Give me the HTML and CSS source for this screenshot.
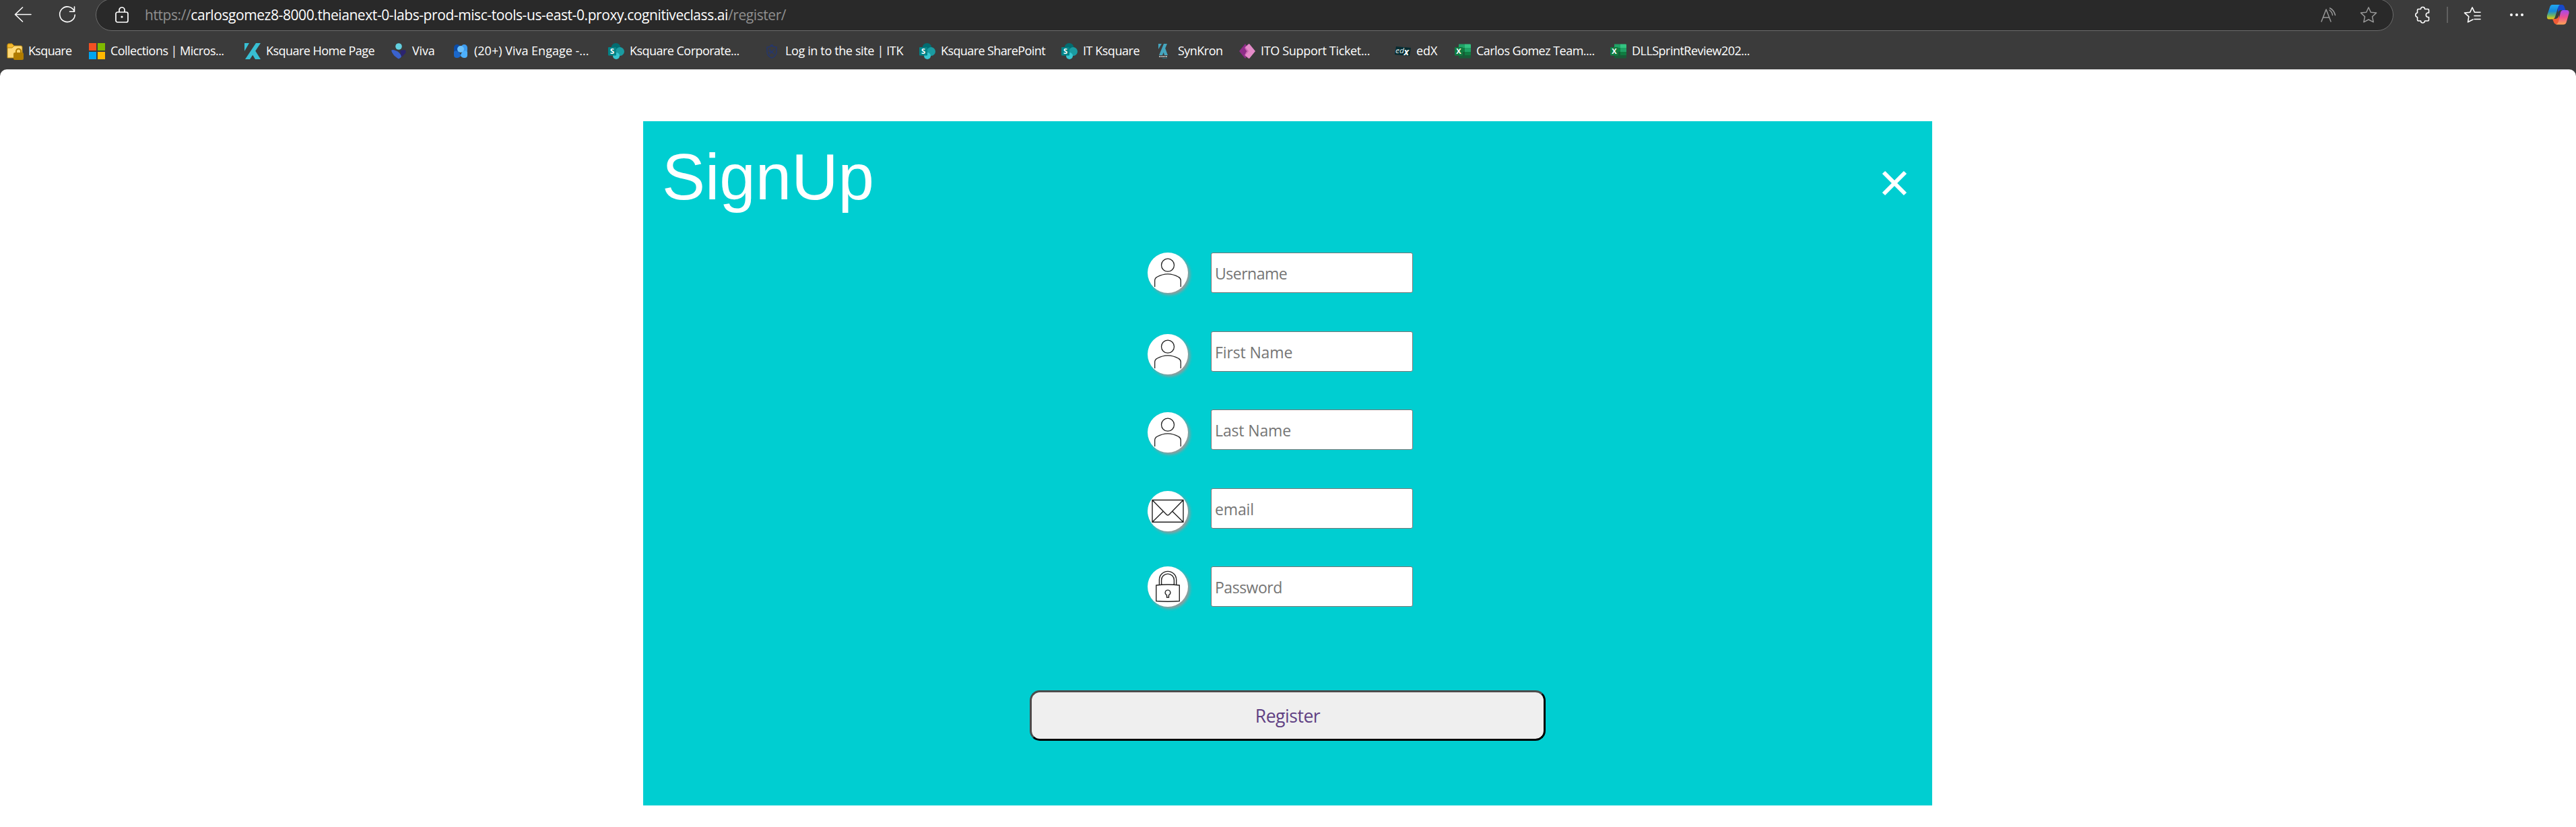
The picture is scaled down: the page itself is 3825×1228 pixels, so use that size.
FILE: index.html
```html
<!DOCTYPE html>
<html lang="en">
<head>
<meta charset="utf-8">
<title>SignUp</title>
<link rel="stylesheet" href="styles.css">
</head>
<body>
<svg class="defs" width="0" height="0" aria-hidden="true">
  <defs>
    <linearGradient id="blue" x1="0" y1="0" x2="1" y2="1"><stop offset="0" stop-color="#0b4fb0"/><stop offset="1" stop-color="#55b9ff"/></linearGradient>
    <linearGradient id="cpA" x1="0" y1="0" x2="0" y2="1"><stop offset="0" stop-color="#22a7f2"/><stop offset=".45" stop-color="#1589d8"/><stop offset=".75" stop-color="#6fb563"/><stop offset="1" stop-color="#f5c80c"/></linearGradient>
    <linearGradient id="cpB" x1="0" y1="0" x2="0" y2="1"><stop offset="0" stop-color="#a348f0"/><stop offset=".5" stop-color="#ee5090"/><stop offset="1" stop-color="#ffa553"/></linearGradient>
  </defs>
  <symbol id="sharepoint" viewBox="0 0 24 24">
    <circle cx="11.500" cy="7" r="7" fill="#036c70"/><circle cx="17.500" cy="12.500" r="6.500" fill="#1a9ba1"/><circle cx="12" cy="19" r="5" fill="#37c6d0"/>
    <rect y="6" width="12" height="12.500" rx="1" fill="#038387"/>
  </symbol>
  <symbol id="excel" viewBox="0 0 24 24">
    <path d="M6 1.500h9v7H6z" fill="#21a366"/><path d="M15 1.500h8a1 1 0 0 1 1 1v4.500h-9z" fill="#33c481"/><path d="M6 7h9v6H6z" fill="#107c41"/><path d="M15 7h9v6h-9z" fill="#21a366"/><path d="M15 13h9v5h-9z" fill="#107c41"/><path d="M6 13h9v5h9v3.500a1 1 0 0 1-1 1H7a1 1 0 0 1-1-1z" fill="#185c37"/>
    <rect y="6" width="12" height="12.500" rx="1" fill="#107c41"/>
  </symbol>
  <symbol id="person" viewBox="0 0 60 60">
    <g fill="none" stroke="#222" stroke-width="1.300"><circle cx="30" cy="18.700" r="9.500"/><path d="M10.700 51V41.500Q10.700 38 14 36.300Q30 27.300 46 36.300Q49.300 38 49.300 41.500V51"/></g>
  </symbol>
</svg>

<header class="browser">
  <div class="toolbar">
    <svg class="nav-icon back" width="26" height="24" viewBox="0 0 26 24"><path d="M12.500 1L1.500 11.500L12.500 22M1.500 11.500H25"/></svg>
    <svg class="nav-icon reload" width="26" height="26" viewBox="0 0 26 26"><path d="M23.500 8A11.300 11.300 0 1 0 24.300 13M23.500 1V8.200H16.500"/></svg>
    <div class="address">
      <svg class="lock" width="20" height="24" viewBox="0 0 20 24"><rect x="1" y="8" width="18" height="15" rx="2.500"/><path d="M6 8V5a4 4 0 0 1 8 0V8"/><circle class="dot" cx="10" cy="15" r="1.600"/></svg>
      <div class="url"><span>https://</span><span class="host">carlosgomez8-8000.theianext-0-labs-prod-misc-tools-us-east-0.proxy.cognitiveclass.ai</span><span>/register/</span></div>
      <svg class="dim read" width="24" height="24" viewBox="0 0 24 24"><path d="M1 22L8 4L15 22M3.500 16H12.500M13 5Q17 8 17.500 12.500M13.500 2Q19.500 5 21.500 12.500"/></svg>
      <svg class="dim fav" width="26" height="26" viewBox="0 0 26 26"><path d="M13 2L16.300 9.200L24.500 10.100L18.500 15.700L20.200 23.800L13 20L5.800 23.800L7.500 15.700L1.500 10.100L9.700 9.200Z"/></svg>
    </div>
    <svg class="nav-icon ext" width="24" height="26" viewBox="0 0 24 26"><path d="M6 4.500H9.500A3 3 0 0 1 15.500 4.500H20Q21.500 4.500 21.500 6V10H20A3.300 3.300 0 0 0 20 16.500H21.500V20.500Q21.500 22 20 22H15.500A3 3 0 0 1 9.500 22H6Q4.500 22 4.500 20.500V16.500A3.300 3.300 0 0 1 4.500 10V6Q4.500 4.500 6 4.500Z"/></svg>
    <span class="divider"></span>
    <svg class="nav-icon favs" width="26" height="26" viewBox="0 0 26 26"><path d="M14 20L6.500 23.800L7.800 15.700L1.500 10.100L9.700 9.200L13 2L16.300 9.200H25M16 14.500H25M16 19.500H25"/></svg>
    <svg class="more" width="22" height="6" viewBox="0 0 22 6"><circle cx="3" cy="3" r="2"/><circle cx="11" cy="3" r="2"/><circle cx="19" cy="3" r="2"/></svg>
    <svg class="copilot" width="34" height="32" viewBox="0 0 34 32">
      <path d="M17 1H23Q26 1 27 5L28.500 9H22Q18 9 17 13Z" fill="#1748c9"/><path d="M9 22H14Q18 21 19 16L20 30H15Q12 30 11 27Z" fill="#ef5b35"/>
      <path d="M9 1H20Q18 2 17 6L13 19Q12 22.500 8 22.500H4Q0 22.500 1 17L5 5Q6 1 9 1Z" fill="url(#cpA)"/>
      <path d="M25 9H30Q34.500 9 33.500 14L30 26Q29 30.500 25 30.500H14Q17 29.500 18 26L21 12.500Q22 9 25 9Z" fill="url(#cpB)"/>
    </svg>
  </div>

  <nav class="bookmarks">
    <a class="bm b1"><svg viewBox="0 0 24 24"><path d="M1 3Q1 1 3 1H8L11 4H21Q23 4 23 6V22H1Z" fill="#ffd977" stroke="#b8860b"/><path d="M1 7H8L11 4L8 1H2L1 3Z" fill="#f5b92e" stroke="#b8860b"/><path d="M14 15V12a3.500 3.500 0 0 1 7 0V15" fill="none" stroke="#b07c00" stroke-width="2"/><rect x="10" y="14" width="15" height="11" rx="2" fill="#b07c00"/></svg><span>Ksquare</span></a>
    <a class="bm b2"><svg viewBox="0 0 24 24"><path d="M0 0h11v11H0z" fill="#f25022"/><path d="M13 0h11v11H13z" fill="#7fba00"/><path d="M0 13h11v11H0z" fill="#00a4ef"/><path d="M13 13h11v11H13z" fill="#ffb900"/></svg><span>Collections | Micros...</span></a>
    <a class="bm b3"><svg viewBox="0 0 24 24"><path d="M0 0H7L0 12ZM17 0H24L8 24H1ZM10 14L14 8L24 24H16Z" fill="#38bfd3"/></svg><span>Ksquare Home Page</span></a>
    <a class="bm b4"><svg viewBox="0 0 24 24"><path d="M14 11L21 10Q24 12 22 15L16 21Z" fill="#2b2470"/><path d="M1 11Q3 9 7 11Q14 13 16 20Q14 24 11 23Q3 18 1 11Z" fill="#3a62cc"/><circle cx="12" cy="5" r="4.800" fill="#62d0e0"/></svg><span>Viva</span></a>
    <a class="bm b5"><svg viewBox="0 0 24 24"><rect x="2" y="2" width="9.500" height="13" rx="4.700" fill="#0b4ca8"/><rect x="12.500" y="2" width="9.500" height="13" rx="4.700" fill="#3d9cf0"/><path d="M2 13Q3 10 7 12Q12 14 12 19Q10 22 6.500 22Q2 22 2 18Z" fill="#1a68cc"/><path d="M22 13Q21 10 17 12Q12 14 12 19Q14 22 17.500 22Q22 22 22 18Z" fill="#4db0fb"/><circle cx="12" cy="9" r="5" fill="#6cc0fb"/></svg><span>(20+) Viva Engage -...</span></a>
    <a class="bm b6"><svg viewBox="0 0 24 24"><use href="#sharepoint"/><text class="mark" x="6" y="16">S</text></svg><span>Ksquare Corporate...</span></a>
    <a class="bm b7"><svg viewBox="0 0 24 24"><g fill="none" stroke="#26376b" stroke-width="1.500"><path d="M5 6Q8 6 12 4Q16 6 19 6V13Q19 19 12 22Q5 19 5 13ZM10 3H14M8 9L16 17M16 9L8 17M10 9L8 12L12 13"/></g></svg><span>Log in to the site | ITK</span></a>
    <a class="bm b8"><svg viewBox="0 0 24 24"><use href="#sharepoint"/><text class="mark" x="6" y="16">S</text></svg><span>Ksquare SharePoint</span></a>
    <a class="bm b9"><svg viewBox="0 0 24 24"><use href="#sharepoint"/><text class="mark" x="6" y="16">S</text></svg><span>IT Ksquare</span></a>
    <a class="bm b10"><svg viewBox="0 0 24 24"><path d="M3 1H8L3 9ZM11 1H16L9 18H4ZM10 11L13 7L17 18H12Z" fill="#45a5be"/><path d="M4 20H16" stroke="#aaa" stroke-width="2" stroke-dasharray="2 .5"/><path d="M9 22.500H16" stroke="#276979"/></svg><span>SynKron</span></a>
    <a class="bm b11"><svg viewBox="0 0 24 24"><path d="M9 1L0 12L9 23L13 17L10 12L13 7Z" fill="#8e2c88"/><path d="M14 1L8 7L11 12L8 18L14 23L17 12Z" fill="#cf63b7"/><path d="M15 1L24 12L15 23L9 18L14 12L9 6Z" fill="#e48bc8"/></svg><span>ITO Support Ticket...</span></a>
    <a class="bm b12"><svg viewBox="0 0 24 24"><path d="M2 5L24 7L22 19L0 17Z" fill="#052b31"/><text class="ed" x="1" y="15" textLength="13" lengthAdjust="spacingAndGlyphs">ed</text><text class="ex" x="13.500" y="18">x</text></svg><span>edX</span></a>
    <a class="bm b13"><svg viewBox="0 0 24 24"><use href="#excel"/><text class="mark" x="6" y="16">X</text></svg><span>Carlos Gomez Team....</span></a>
    <a class="bm b14"><svg viewBox="0 0 24 24"><use href="#excel"/><text class="mark" x="6" y="16">X</text></svg><span>DLLSprintReview202...</span></a>
  </nav>
</header>

<main class="page">
  <form class="card">
    <div class="card-head">
      <h1>SignUp</h1>
      <svg class="close" width="38" height="38" viewBox="0 0 38 38"><path d="M3 3L35 35M35 3L3 35"/></svg>
    </div>
    <div class="fields">
      <div class="field"><svg class="badge"><use href="#person"/></svg><input class="username" type="text" placeholder="Username"></div>
      <div class="field low"><svg class="badge"><use href="#person"/></svg><input type="text" placeholder="First Name"></div>
      <div class="field low"><svg class="badge"><use href="#person"/></svg><input type="text" placeholder="Last Name"></div>
      <div class="field low"><svg class="badge" viewBox="0 0 60 60"><g fill="none" stroke="#222" stroke-width="1.400"><path d="M7 13.500H53V46.300H7ZM7 13.500L27.500 34.500Q30 37.500 32.500 34.500L53 13.500M7 46.300L23 30.500M53 46.300L37 30.500"/></g></svg><input type="text" placeholder="email"></div>
      <div class="field"><svg class="badge" viewBox="0 0 60 60"><g fill="none" stroke="#222" stroke-width="1.400"><path d="M12.800 28Q30 26 47.300 28V51.500Q30 53 12.800 51.500ZM17.400 27.500V20A12.650 12.650 0 0 1 42.700 20V27.500M20.600 27.200V20.500A9.400 9.400 0 0 1 39.400 20.500V27.200M28.500 42.600A3.900 3.900 0 1 1 31.500 42.600V46H28.500Z"/></g></svg><input class="password" type="password" placeholder="Password"></div>
    </div>
    <button class="register" type="button">Register</button>
  </form>
</main>
</body>
</html>
```
FILE: styles.css
```css
* { box-sizing: border-box; }

body {
  margin: 0;
  background: #3b3b3b;
  font-family: "Open Sans", "Noto Sans", sans-serif;
}

svg { display: block; flex: none; }
.defs { position: absolute; }

/* Browser chrome */
.browser { height: 103px; overflow: hidden; }

.toolbar {
  display: flex;
  align-items: center;
  height: 48px;
  margin-top: -2px;
  padding-left: 21px;
}

.nav-icon { fill: none; stroke: #fff; stroke-width: 1.6; stroke-linejoin: round; stroke-linecap: round; }
.reload { margin-left: 40px; }

.address {
  display: flex;
  align-items: center;
  width: 3412px;
  height: 48px;
  margin-left: 29px;
  padding-left: 28px;
  border: 1px solid #6c6c6c;
  border-radius: 24px;
  background: #292929;
}

.lock { fill: none; stroke: #fff; stroke-width: 1.7; }
.lock .dot { fill: #fff; stroke: none; }

.url {
  margin-left: 24px;
  color: #8f8f8f;
  font-size: 21px;
  letter-spacing: -0.42px;
  white-space: nowrap;
}
.host { color: #fff; }

.dim { fill: none; stroke: #989898; stroke-width: 1.5; stroke-linejoin: round; stroke-linecap: round; }
.read { margin-left: auto; }
.fav { margin: 0 23px 0 34px; }
.ext { margin-left: 31px; }
.divider { width: 2px; height: 24px; margin: 0 23px 0 24px; background: #606060; }
.more { margin-left: 42px; fill: #fff; }
.copilot { margin-left: 33px; }

.bookmarks {
  display: flex;
  align-items: center;
  height: 24px;
  margin-top: 18px;
  padding-left: 10px;
}

.bm {
  display: flex;
  flex: none;
  align-items: center;
  gap: 8px;
  color: #fff;
  font-size: 18px;
  line-height: 24px;
  white-space: nowrap;
}
.bm svg { width: 24px; height: 24px; overflow: visible; }
.bm span { margin-top: -2px; }
.mark { fill: #fff; font-size: 11px; font-weight: 700; letter-spacing: 0; text-anchor: middle; }
.ed { fill: #dfe9e9; font-size: 11px; font-style: italic; }
.ex { fill: #fff; font-size: 14px; font-style: italic; font-weight: 700; }
.b1 { width: 122px; letter-spacing: -0.66px; }
.b2 { width: 231px; letter-spacing: -0.54px; }
.b3 { width: 217px; letter-spacing: -0.53px; }
.b4 { width: 92px; letter-spacing: -0.2px; }
.b5 { width: 231px; }
.b6 { width: 231px; letter-spacing: -0.53px; }
.b7 { width: 231px; letter-spacing: -0.37px; }
.b8 { width: 211px; letter-spacing: -0.6px; }
.b9 { width: 141px; letter-spacing: -0.47px; }
.b10 { width: 123px; letter-spacing: -0.53px; }
.b11 { width: 231px; letter-spacing: -0.33px; }
.b12 { width: 89px; }
.b13 { width: 231px; letter-spacing: -0.53px; }
.b14 { width: 231px; letter-spacing: -0.53px; }

/* Page */
.page {
  display: flex;
  justify-content: center;
  height: 1125px;
  padding: 77px 1px 0 0;
  border-radius: 10px 10px 0 0;
  background: #fff;
}

.card {
  display: flex;
  flex-direction: column;
  align-items: center;
  width: 1914px;
  height: 1016px;
  background: #00ced1;
}

.card-head {
  display: flex;
  justify-content: space-between;
  width: 100%;
  height: 195px;
  padding: 28px 37px 0 28px;
}

h1 {
  margin: 0;
  color: #fff;
  font: 400 96px/110px "Liberation Sans", Arial, sans-serif;
}

.close { margin-top: 45px; fill: none; stroke: #fff; stroke-width: 6; }

.fields {
  display: flex;
  flex-direction: column;
  gap: 56.5px;
  margin-left: -22px;
}

.field { display: flex; gap: 34px; height: 60px; }

.badge {
  width: 60px;
  height: 60px;
  border-radius: 50%;
  background: #fff;
  box-shadow: 3px 3px 4px #999;
}
.low .badge { margin-top: 4px; }

input {
  width: 300px;
  height: 60px;
  padding: 2px 5px 0;
  border: 1px solid #767676;
  border-radius: 3px;
  background: #fff;
  font: 23px "Open Sans", "Noto Sans", sans-serif;
  letter-spacing: -0.13px;
}
input::placeholder { color: #757575; }
.username, .password { letter-spacing: -0.48px; }

.register {
  width: 766px;
  height: 75px;
  margin-top: 124px;
  padding: 1px 0 0;
  border: 3px solid;
  border-color: #4c4c4c #000 #000 #4c4c4c;
  border-radius: 15px;
  background: #efefef;
  color: #5f3f83;
  font: 26.5px "Open Sans", "Noto Sans", sans-serif;
  letter-spacing: -0.45px;
}
```
